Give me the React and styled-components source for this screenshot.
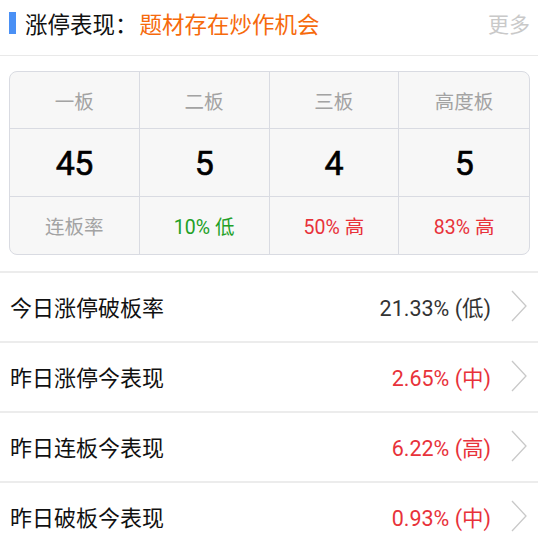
import React from 'react'
import styled, { createGlobalStyle } from 'styled-components'

const Global = createGlobalStyle`
  html, body { margin: 0; padding: 0; background: #fff; }
  body { font-family: Roboto, "Noto Sans CJK SC", sans-serif; }
`

const Page = styled.div`
  width: 538px;
  height: 544px;
  overflow: hidden;
  background: #fff;
`

const Header = styled.div`
  height: 56px;
  box-sizing: border-box;
  display: flex;
  align-items: center;
  padding: 0 8px 10px 9px;
  border-bottom: 1px solid #e9e9e9;
`
const Mark = styled.span`
  width: 7px;
  height: 22px;
  background: #4a90f5;
  margin-right: 9px;
  margin-top: 1px;
`
const Title = styled.span`
  font-size: 22.5px;
  color: #111;
`
const Topic = styled.span`
  font-size: 22.5px;
  color: #f66a0c;
  margin-left: 2px;
  flex: 1;
`
const More = styled.span`
  font-size: 21px;
  color: #c9c9c9;
`

const Card = styled.div`
  margin: 15px 8px 0 9px;
  border: 1px solid #d9dbe2;
  border-radius: 8px;
  background: #f7f7f7;
  display: grid;
  grid-template-columns: repeat(4, 1fr);
  grid-template-rows: 57px 68px 57px;
  overflow: hidden;
`
const Cell = styled.div`
  display: flex;
  align-items: center;
  justify-content: center;
  border-right: ${p => (p.$last ? 'none' : '1px solid #d9dbe2')};
  border-bottom: ${p => (p.$bottom ? 'none' : '1px solid #d9dbe2')};
  font-size: ${p => (p.$big ? '34px' : '19.5px')};
  font-weight: 400;
  letter-spacing: ${p => (p.$big ? '-0.5px' : '0')};
  -webkit-text-stroke: ${p => (p.$big ? '0.6px #000' : '0')};
  color: ${p => p.$color || '#a3a3a3'};
`

const List = styled.div`
  margin-top: 16px;
`
const Row = styled.div`
  height: 70px;
  box-sizing: border-box;
  border-top: 2px solid #ececec;
  display: flex;
  align-items: center;
  padding: 0 11px 2px 10px;
`
const Label = styled.span`
  flex: 1;
  font-size: 22px;
  color: #111;
`
const Value = styled.span`
  font-size: 21.5px;
  color: ${p => p.$color};
  margin-right: 20px;
`

const Chevron = () => (
  <svg width="16" height="32" viewBox="0 0 16 32">
    <polyline points="1,1 15,16 1,31" fill="none" stroke="#c9c9c9" strokeWidth="1.3" />
  </svg>
)

const cols = [
  { head: '一板', num: '45', rate: '连板率', color: '#a3a3a3' },
  { head: '二板', num: '5', rate: '10% 低', color: '#22a026' },
  { head: '三板', num: '4', rate: '50% 高', color: '#e8323a' },
  { head: '高度板', num: '5', rate: '83% 高', color: '#e8323a' },
]

const rows = [
  { label: '今日涨停破板率', value: '21.33% (低)', color: '#333' },
  { label: '昨日涨停今表现', value: '2.65% (中)', color: '#e8323a' },
  { label: '昨日连板今表现', value: '6.22% (高)', color: '#e8323a' },
  { label: '昨日破板今表现', value: '0.93% (中)', color: '#e8323a' },
]

export default function App() {
  return (
    <Page>
      <Global />
      <Header>
        <Mark />
        <Title>涨停表现：</Title>
        <Topic>题材存在炒作机会</Topic>
        <More>更多</More>
      </Header>
      <Card>
        {cols.map((c, i) => (
          <Cell key={'h' + i} $last={i === 3}>{c.head}</Cell>
        ))}
        {cols.map((c, i) => (
          <Cell key={'n' + i} $last={i === 3} $big $color="#000">{c.num}</Cell>
        ))}
        {cols.map((c, i) => (
          <Cell key={'r' + i} $last={i === 3} $bottom $color={c.color}>{c.rate}</Cell>
        ))}
      </Card>
      <List>
        {rows.map(r => (
          <Row key={r.label}>
            <Label>{r.label}</Label>
            <Value $color={r.color}>{r.value}</Value>
            <Chevron />
          </Row>
        ))}
      </List>
    </Page>
  )
}
